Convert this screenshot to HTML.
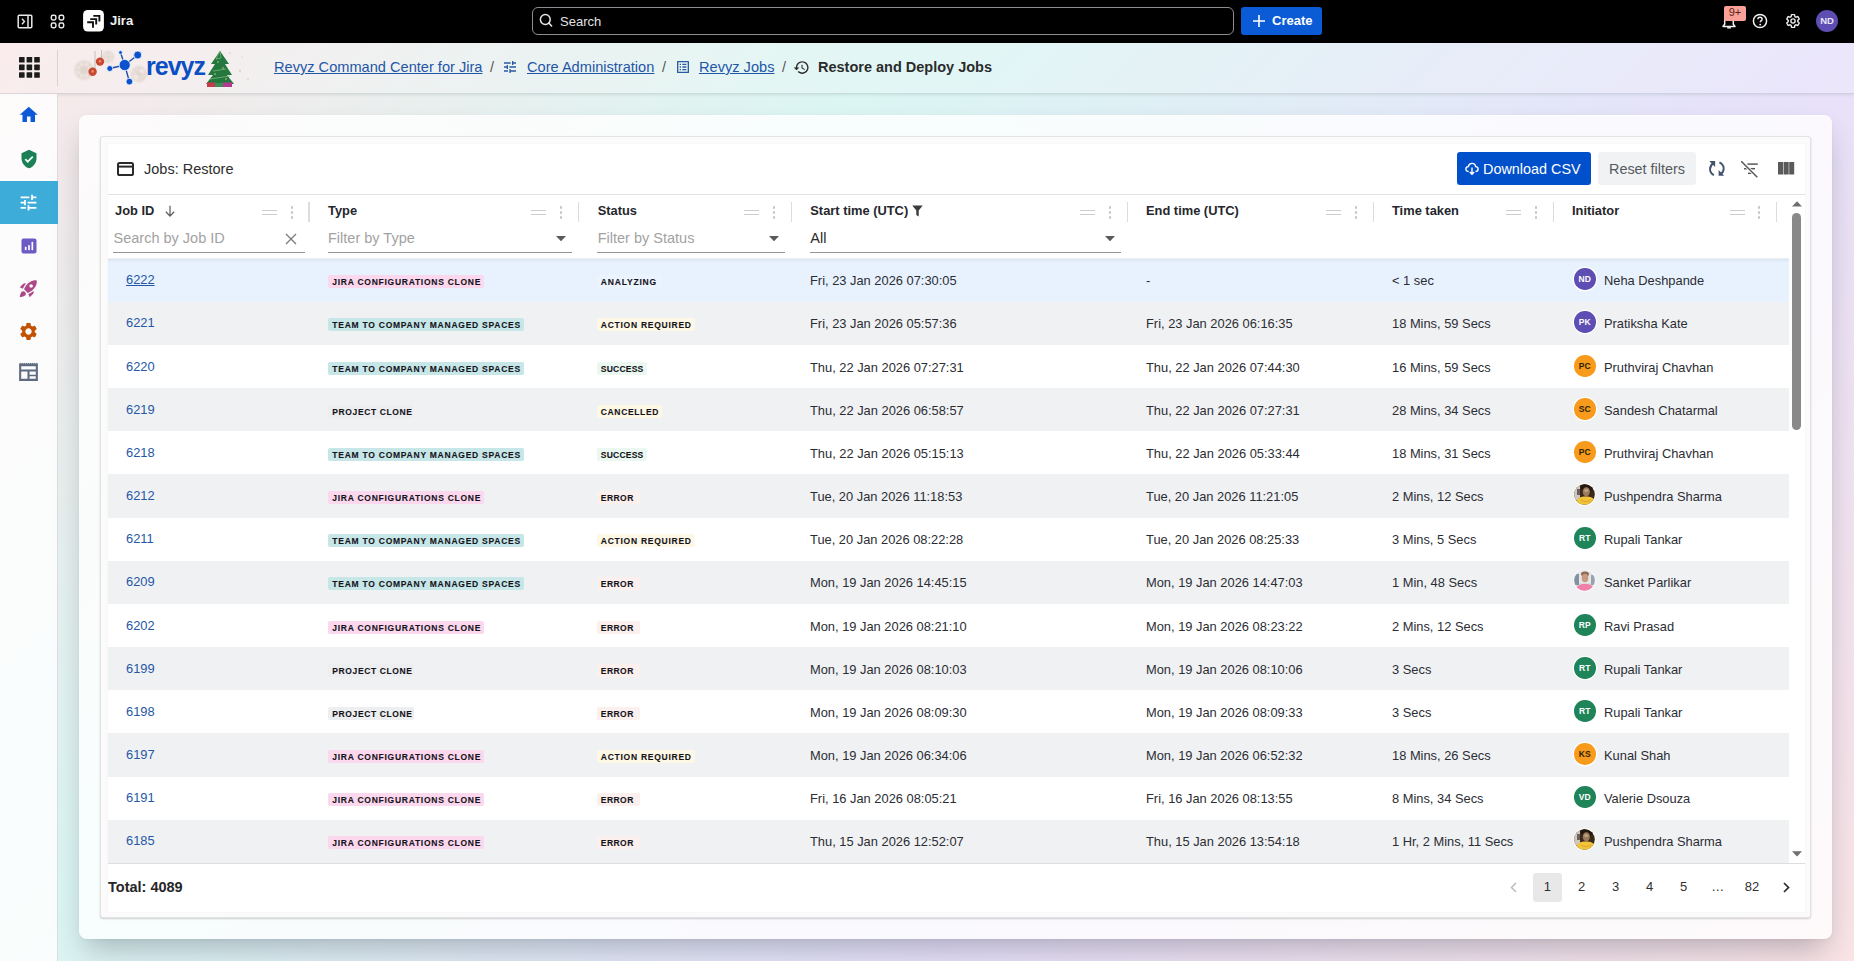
<!DOCTYPE html>
<html><head><meta charset="utf-8"><title>Restore and Deploy Jobs</title><style>
*{box-sizing:border-box;margin:0;padding:0}
html,body{width:1854px;height:961px;overflow:hidden}
body{position:relative;font-family:"Liberation Sans",sans-serif;color:#292a2e;
 background:linear-gradient(135deg,#fbe7e9 0%,#dbf6f3 34%,#e7e1fa 67%,#fae4e6 100%)}
.a{position:absolute;white-space:nowrap;line-height:1}
#top{left:0;top:0;width:1854px;height:43px;background:#000}
#hdr{left:0;top:43px;width:1854px;height:51px;background:rgba(255,255,255,.18);border-bottom:1px solid rgba(120,130,130,.22);box-shadow:0 1px 3px rgba(0,40,40,.10)}
#side{left:0;top:94px;width:58px;height:867px;background:rgba(255,255,255,.82);border-right:1px solid rgba(170,160,165,.35)}
#outer{left:79px;top:115px;width:1753px;height:824px;background:rgba(255,255,255,.80);border-radius:8px;box-shadow:0 16px 30px -6px rgba(40,45,60,.30),0 1px 3px rgba(0,0,0,.04);border-top:1px solid rgba(255,255,255,.7)}
#inner{left:100px;top:136px;width:1711px;height:782px;background:#fbfbfc;border:1px solid #e3e3e6;border-radius:3px;box-shadow:0 1px 2px rgba(0,0,0,.18)}
.bc{font-size:14.6px;color:#1f56a8;text-decoration:underline;text-underline-offset:1px}
.sep{font-size:14.5px;color:#555}
.hd{font-size:12.87px;font-weight:bold;color:#25272c}
.ph{font-size:14.5px;color:#9e9e9e}
.ul{height:1px;background:#959595}
.cell{font-size:12.87px;color:#2b2d33}
.lnk{font-size:12.87px;color:#2557a7}
.chip{height:13.5px;border-radius:2px}
.ct{font-size:8.5px;font-weight:bold;color:#15131a;-webkit-text-stroke:0.1px #15131a}
.drag{width:15px;height:5.6px;border-top:1.8px solid #cdcdcd;border-bottom:1.8px solid #cdcdcd}
.dot{width:2.4px;height:2.4px;border-radius:50%;background:#c4c4c4}
.vsep{width:1.5px;height:20px;background:#dcdcdc}
.av{width:21.5px;height:21.5px;border-radius:50%;box-shadow:0 0 0 1.3px #fff;font-size:8.5px;font-weight:bold;text-align:center;line-height:23px}
.pg{font-size:13px;color:#303030;text-align:center;width:28px}
</style></head><body>
<div id="top" class="a"></div>
<svg class="a" style="left:17px;top:14px" width="16" height="15" viewBox="0 0 16 15"><rect x="1.2" y="1.2" width="13.6" height="12.6" rx="1" fill="none" stroke="#e8e8e8" stroke-width="1.5"/><line x1="11" y1="1.5" x2="11" y2="13.5" stroke="#e8e8e8" stroke-width="1.5"/><path d="M5 4.8 L7.4 7.5 L5 10.2" fill="none" stroke="#e8e8e8" stroke-width="1.4"/></svg>
<svg class="a" style="left:50px;top:14px" width="15" height="15" viewBox="0 0 15 15"><g fill="none" stroke="#e8e8e8" stroke-width="1.5"><rect x="1.3" y="1.3" width="4.6" height="4.6" rx="1.6"/><rect x="9.1" y="1.3" width="4.6" height="4.6" rx="1.6"/><rect x="1.3" y="9.1" width="4.6" height="4.6" rx="1.6"/><rect x="9.1" y="9.1" width="4.6" height="4.6" rx="1.6"/></g></svg>
<svg class="a" style="left:83px;top:10px" width="21" height="22" viewBox="0 0 21 22"><rect x="0.1" y="0" width="20.8" height="21.6" rx="4.6" fill="#fff"/><g fill="none" stroke="#111" stroke-width="1.9" stroke-linejoin="miter"><path d="M10.3 5.9 H16.4 V11.6"/><path d="M7.2 9.1 H13.2 V14.6"/><path d="M4.2 12.2 H10.0 V17.8"/></g></svg>
<div class="a" style="left:110px;top:14px;font-size:13px;font-weight:bold;color:#f0f0f0">Jira</div>
<div class="a" style="left:532px;top:7px;width:702px;height:28px;border:1px solid #8b8d92;border-radius:6px;background:#000"></div>
<svg class="a" style="left:539px;top:13px" width="15" height="15" viewBox="0 0 15 15"><circle cx="6.3" cy="6.5" r="4.9" fill="none" stroke="#e6e6e6" stroke-width="1.5"/><line x1="9.8" y1="10" x2="12.6" y2="13" stroke="#e6e6e6" stroke-width="1.6" stroke-linecap="round"/></svg>
<div class="a" style="left:560px;top:15px;font-size:13px;color:#e2e2e2">Search</div>
<div class="a" style="left:1241px;top:7px;width:81px;height:28px;background:#0b5bd6;border-radius:3px"></div>
<svg class="a" style="left:1252px;top:14px" width="14" height="14" viewBox="0 0 14 14"><path d="M7 1V13M1 7H13" stroke="#fff" stroke-width="1.6"/></svg>
<div class="a" style="left:1272px;top:14px;font-size:13px;font-weight:bold;color:#fff">Create</div>
<svg class="a" style="left:1720px;top:12px" width="18" height="18" viewBox="0 0 18 18"><path d="M3 14.5 H15 L13.3 12.2 V8.2 C13.3 5.6 11.3 3.7 9 3.7 C6.7 3.7 4.7 5.6 4.7 8.2 V12.2 Z" fill="none" stroke="#f0f0f0" stroke-width="1.5" stroke-linejoin="round"/><path d="M7.2 15.8 H10.8" stroke="#f0f0f0" stroke-width="1.5"/></svg>
<div class="a" style="left:1724px;top:6px;width:22px;height:15px;background:#f9a196;border-radius:2px"></div>
<div class="a" style="left:1724px;top:7px;width:22px;text-align:center;font-size:11px;color:#5a1d1d">9+</div>
<svg class="a" style="left:1752px;top:13px" width="16" height="16" viewBox="0 0 16 16"><circle cx="8" cy="8" r="6.6" fill="none" stroke="#f0f0f0" stroke-width="1.5"/><path d="M5.9 6.3 C5.9 5 6.9 4.3 8 4.3 C9.2 4.3 10.1 5.1 10.1 6.2 C10.1 7.6 8.3 7.7 8.3 9.3" fill="none" stroke="#f0f0f0" stroke-width="1.5"/><circle cx="8.2" cy="11.6" r="0.95" fill="#f0f0f0"/></svg>
<svg class="a" style="left:1785px;top:13px" width="16" height="16" viewBox="0 0 24 24"><path d="M19.14 12.94c.04-.3.06-.61.06-.94 0-.32-.02-.64-.07-.94l2.03-1.58c.18-.14.23-.41.12-.61l-1.92-3.32c-.12-.22-.37-.29-.59-.22l-2.39.96c-.5-.38-1.03-.7-1.62-.94l-.36-2.54c-.04-.24-.24-.41-.48-.41h-3.84c-.24 0-.43.17-.47.41l-.36 2.54c-.59.24-1.130.57-1.62.94l-2.39-.96c-.22-.08-.47 0-.59.22L2.74 8.87c-.12.21-.08.47.12.61l2.030 1.58c-.05.3-.09.63-.09.94s.02.64.07.94l-2.03 1.58c-.18.14-.23.41-.12.61l1.92 3.32c.12.22.37.29.59.22l2.39-.96c.5.38 1.03.7 1.62.94l.36 2.54c.05.24.24.41.48.41h3.84c.24 0 .44-.17.47-.41l.36-2.54c.59-.24 1.13-.56 1.62-.94l2.39.96c.22.08.47 0 .59-.22l1.92-3.32c.12-.22.07-.47-.12-.61l-2.01-1.58z" fill="none" stroke="#f0f0f0" stroke-width="2"/><circle cx="12" cy="12" r="3.2" fill="none" stroke="#f0f0f0" stroke-width="2"/></svg>
<div class="a" style="left:1816px;top:10px;width:22px;height:22px;border-radius:50%;background:#5e4db2"></div>
<div class="a" style="left:1816px;top:16px;width:22px;text-align:center;font-size:9.5px;font-weight:bold;color:#e9e6f7">ND</div>
<div id="hdr" class="a"></div>
<div class="a" style="left:57px;top:50px;width:1px;height:36px;background:rgba(140,130,135,.25)"></div>
<svg class="a" style="left:19px;top:57px" width="21" height="21" viewBox="0 0 21 21"><g fill="#1c1c1c"><rect x="0.0" y="0.0" width="5.6" height="5.6" rx=".6"/><rect x="7.6" y="0.0" width="5.6" height="5.6" rx=".6"/><rect x="15.2" y="0.0" width="5.6" height="5.6" rx=".6"/><rect x="0.0" y="7.6" width="5.6" height="5.6" rx=".6"/><rect x="7.6" y="7.6" width="5.6" height="5.6" rx=".6"/><rect x="15.2" y="7.6" width="5.6" height="5.6" rx=".6"/><rect x="0.0" y="15.2" width="5.6" height="5.6" rx=".6"/><rect x="7.6" y="15.2" width="5.6" height="5.6" rx=".6"/><rect x="15.2" y="15.2" width="5.6" height="5.6" rx=".6"/></g></svg>
<svg class="a" style="left:70px;top:49px" width="185" height="40" viewBox="0 0 185 40">
<filter id="bl"><feGaussianBlur stdDeviation="0.9"/></filter>
<g fill="none" stroke="#d8cdc2" stroke-width="1.8" opacity=".75" filter="url(#bl)">
<circle cx="14" cy="21" r="8.5"/><circle cx="14" cy="21" r="3.5"/><path d="M5 21H23M14 12V30M8 15L20 27M20 15L8 27"/>
<circle cx="69" cy="25" r="7"/><path d="M62 25H76M69 18V32M64 20L74 30"/>
<circle cx="38" cy="8" r="5"/><path d="M33 8H43M38 3V13"/>
</g>
<g stroke="#bdb2a8" stroke-width=".8"><line x1="25" y1="2" x2="25" y2="22"/><line x1="31.5" y1="1" x2="31.5" y2="12"/></g>
<circle cx="30" cy="12.6" r="4.2" fill="#c7482f"/><circle cx="22.6" cy="22.8" r="4.2" fill="#c54a30"/>
<circle cx="30" cy="12.2" r="1.3" fill="#f08870"/><circle cx="22.6" cy="22.4" r="1.3" fill="#f08870"/>
<g stroke="#1d4aa8" stroke-width="1.4"><line x1="54.7" y1="16" x2="50.5" y2="3.5"/><line x1="54.7" y1="16" x2="67.7" y2="6"/><line x1="54.7" y1="16" x2="39.8" y2="19.5"/><line x1="54.7" y1="16" x2="59.4" y2="32.6"/></g>
<g fill="#0b52cc" stroke="#f4faff" stroke-width=".8"><circle cx="54.7" cy="16" r="5.6"/><circle cx="50.5" cy="3.5" r="1.9"/><circle cx="67.7" cy="6" r="4"/><circle cx="39.8" cy="19.5" r="3"/><circle cx="59.4" cy="32.6" r="3.4"/></g>
<g fill="#e6d6bc" opacity=".9"><circle cx="152" cy="8" r="1"/><circle cx="170" cy="22" r="1.2"/><circle cx="178" cy="30" r="1"/><circle cx="160" cy="4" r="1"/><circle cx="172" cy="8" r=".8"/></g>
<path d="M150 2 L141 15 H145 L138 26 H143 L136 35 H164 L157 26 H162 L155 15 H159 Z" fill="#23773f"/>
<path d="M150 2 L146 10 L151 9 Z M143 22 L156 20 M140 30 L160 27" stroke="#7ab872" stroke-width=".8" fill="none"/>
<g fill="#e8e0a0"><circle cx="148" cy="13" r=".7"/><circle cx="153" cy="19" r=".7"/><circle cx="145" cy="25" r=".7"/><circle cx="156" cy="30" r=".7"/></g>
<rect x="137" y="33.5" width="8" height="4.5" fill="#c73b4e"/><rect x="145" y="34" width="8" height="4" fill="#3b8e55"/><rect x="153" y="33.5" width="9" height="4.5" fill="#b23a8e"/>
</svg>
<div class="a" style="left:146px;top:54px;font-size:25px;font-weight:bold;color:#0b4fc4;letter-spacing:-1px">revyz</div>
<div class="a bc" style="left:274px;top:60px">Revyz Command Center for Jira</div>
<div class="a sep" style="left:490px;top:60px">/</div>
<svg class="a" style="left:502px;top:59px" width="16" height="16" viewBox="0 0 24 24"><path fill="#2a5aa0" d="M3 17v2h6v-2H3zM3 5v2h10V5H3zm10 16v-2h8v-2h-8v-2h-2v6h2zM7 9v2H3v2h4v2h2V9H7zm14 4v-2H11v2h10zm-6-4h2V7h4V5h-4V3h-2v6z"/></svg>
<div class="a bc" style="left:527px;top:60px">Core Administration</div>
<div class="a sep" style="left:662px;top:60px">/</div>
<svg class="a" style="left:675px;top:59px" width="16" height="16" viewBox="0 0 24 24"><path fill="#2a5aa0" d="M19 5v14H5V5h14m1.1-2H3.9c-.5 0-.9.4-.9.9v16.2c0 .4.4.9.9.9h16.2c.4 0 .9-.5.9-.9V3.9c0-.5-.5-.9-.9-.9zM11 7h6v2h-6V7zm0 4h6v2h-6v-2zm0 4h6v2h-6zM7 7h2v2H7zm0 4h2v2H7zm0 4h2v2H7z"/></svg>
<div class="a bc" style="left:699px;top:60px">Revyz Jobs</div>
<div class="a sep" style="left:782px;top:60px">/</div>
<svg class="a" style="left:793px;top:59px" width="17" height="17" viewBox="0 0 24 24"><path fill="#2b2b2b" d="M13 3c-4.97 0-9 4.03-9 9H1l3.89 3.89.07.14L9 12H6c0-3.87 3.13-7 7-7s7 3.13 7 7-3.13 7-7 7c-1.93 0-3.68-.79-4.94-2.06l-1.42 1.42C8.27 19.99 10.51 21 13 21c4.97 0 9-4.03 9-9s-4.03-9-9-9zm-1 5v5l4.28 2.54.72-1.21-3.5-2.08V8H12z"/></svg>
<div class="a" style="left:818px;top:60px;font-size:14.5px;font-weight:bold;color:#2b2b2b">Restore and Deploy Jobs</div>
<div id="side" class="a"></div>
<div class="a" style="left:0;top:181px;width:58px;height:43px;background:#3eacd8"></div>
<svg class="a" style="left:17.9px;top:104.2px" width="21.5" height="21.5" viewBox="0 0 24 24"><g fill="#0c5ad8"><path d="M10 20v-6h4v6h5v-8h3L12 3 2 12h3v8z"/></g></svg>
<svg class="a" style="left:18.7px;top:148.6px" width="20" height="20" viewBox="0 0 24 24"><g fill="#1d7f55"><path d="M12 1L3 5v6c0 5.55 3.84 10.74 9 12 5.16-1.26 9-6.45 9-12V5l-9-4z"/><path d="M7.5 12.2l3 3 6-6" fill="none" stroke="#e8fff4" stroke-width="2.2"/></g></svg>
<svg class="a" style="left:18.2px;top:192.3px" width="21" height="21" viewBox="0 0 24 24"><g fill="#ffffff"><path d="M3 17v2h6v-2H3zM3 5v2h10V5H3zm10 16v-2h8v-2h-8v-2h-2v6h2zM7 9v2H3v2h4v2h2V9H7zm14 4v-2H11v2h10zm-6-4h2V7h4V5h-4V3h-2v6z"/></g></svg>
<svg class="a" style="left:18.7px;top:235.6px" width="20" height="20" viewBox="0 0 24 24"><g fill="#6b5bc4"><rect x="3" y="3" width="18" height="18" rx="2.5"/><g fill="#fff"><rect x="7" y="13" width="2" height="4"/><rect x="11" y="11" width="2" height="6"/><rect x="15" y="7" width="2" height="10"/></g></g></svg>
<svg class="a" style="left:18.2px;top:278.1px" width="21" height="21" viewBox="0 0 24 24"><g fill="#ae4787"><path d="M9.19 6.35c-2.04 2.29-3.44 5.58-3.57 5.89L2 10.69l4.05-4.05c.47-.47 1.15-.68 1.81-.55l1.33.26zM11.17 17s3.740-1.55 5.89-3.7c5.4-5.4 4.5-9.62 4.21-10.57-.95-.3-5.17-1.19-10.57 4.21C8.55 9.09 7 12.83 7 12.83L11.17 17zm6.48-2.19c-2.29 2.04-5.58 3.44-5.89 3.570L13.31 22l4.05-4.05c.47-.47.68-1.15.55-1.81l-.26-1.33zM9 18c0 .83-.34 1.58-.88 2.12C6.94 21.3 2 22 2 22s.7-4.94 1.88-6.12C4.42 15.34 5.17 15 6 15c1.66 0 3 1.34 3 3zm4-9c0-1.1.9-2 2-2s2 .9 2 2-.9 2-2 2-2-.9-2-2z"/></g></svg>
<svg class="a" style="left:18.2px;top:321.0px" width="21" height="21" viewBox="0 0 24 24"><g fill="#c25100"><path d="M19.14 12.94c.04-.3.06-.61.06-.94 0-.32-.02-.64-.07-.94l2.03-1.58c.18-.14.23-.41.12-.61l-1.92-3.32c-.12-.22-.37-.29-.59-.22l-2.39.96c-.5-.38-1.03-.7-1.62-.94l-.36-2.54c-.04-.24-.24-.41-.48-.41h-3.84c-.24 0-.43.17-.47.41l-.36 2.54c-.59.24-1.13.57-1.62.94l-2.39-.96c-.22-.08-.47 0-.59.22L2.74 8.87c-.12.21-.08.47.12.61l2.03 1.58c-.05.3-.09.63-.09.94s.02.64.07.94l-2.03 1.58c-.18.14-.23.41-.12.61l1.92 3.32c.12.22.37.29.59.22l2.39-.96c.5.38 1.03.7 1.62.94l.36 2.54c.05.24.24.41.48.41h3.84c.24 0 .44-.17.47-.41l.36-2.54c.59-.24 1.13-.56 1.62-.94l2.39.96c.22.08.47 0 .59-.22l1.92-3.32c.12-.22.07-.47-.12-.61l-2.01-1.58zM12 15.6c-1.98 0-3.6-1.62-3.6-3.6s1.62-3.6 3.6-3.6 3.6 1.62 3.6 3.6-1.62 3.6-3.6 3.6z"/></g></svg>
<svg class="a" style="left:16.2px;top:359.0px" width="25" height="25" viewBox="0 0 24 24"><g fill="#5f6b80"><path d="M3 4.5 L4 3.5 L5 4.5 L6 3.5 L7 4.5 L8 3.5 L9 4.5 L10 3.5 L11 4.5 L12 3.5 L13 4.5 L14 3.5 L15 4.5 L16 3.5 L17 4.5 L18 3.5 L19 4.5 L20 3.5 L21 4.5 V21 H3 Z M5 7 V10 H19 V7 Z M5 12 V19 H11 V12 Z M13 12 V15 H19 V12 Z M13 16.5 V19 H19 V16.5 Z" fill-rule="evenodd"/></g></svg>
<div id="outer" class="a"></div>
<div id="inner" class="a"></div>
<div class="a" style="left:107.5px;top:143.5px;width:1697px;height:768px;background:#fff;box-shadow:0 0 1px rgba(0,0,0,.08)"></div>
<svg class="a" style="left:117px;top:161.5px" width="17" height="14" viewBox="0 0 17 14"><rect x="1" y="1" width="15" height="12" rx="1.6" fill="none" stroke="#2a2a2a" stroke-width="2"/><line x1="1" y1="4.6" x2="16" y2="4.6" stroke="#2a2a2a" stroke-width="2"/></svg>
<div class="a" style="left:144px;top:162px;font-size:14.5px;color:#2e2e2e">Jobs: Restore</div>
<div class="a" style="left:1457px;top:152px;width:134px;height:33px;background:#0050cc;border-radius:3px"></div>
<svg class="a" style="left:1465px;top:162px" width="14" height="13" viewBox="0 0 14 13"><path d="M3.6 9.5 C1.8 9.5 0.9 8.3 0.9 7 C0.9 5.6 2 4.6 3.3 4.6 C3.7 2.6 5.2 1.4 7 1.4 C9 1.4 10.5 2.9 10.6 4.6 C12 4.6 13.1 5.7 13.1 7 C13.1 8.4 12 9.5 10.5 9.5" fill="none" stroke="#fff" stroke-width="1.4"/><path d="M7 5.5 V12.5 M4.8 10 L7 12.3 L9.2 10" fill="none" stroke="#fff" stroke-width="1.4"/></svg>
<div class="a" style="left:1483px;top:162px;font-size:14.4px;color:#fff">Download CSV</div>
<div class="a" style="left:1598px;top:152px;width:98px;height:33px;background:#f1f2f4;border-radius:3px"></div>
<div class="a" style="left:1609px;top:162px;font-size:14.4px;color:#555a60">Reset filters</div>
<svg class="a" style="left:1708px;top:160px" width="18" height="18" viewBox="0 0 18 18"><g fill="none" stroke="#44546f" stroke-width="1.9"><path d="M5.2 3.4 C2.9 5 2 7 2 9.2 C2 11.6 3.4 13.7 5.9 15.2"/><path d="M11.4 2.4 C14.2 3.8 15.7 6 15.7 8.6 C15.7 11 14.6 13 12.6 14.4"/></g><path d="M1.3 1.1 H7.1 V6.9 Z" fill="#44546f"/><path d="M16.2 15.7 H10.6 V10.1 Z" fill="#44546f"/></svg>
<svg class="a" style="left:1740px;top:160px" width="19" height="19" viewBox="0 0 19 19"><g stroke="#585858" stroke-width="1.5" fill="none"><line x1="7.4" y1="4.1" x2="17.8" y2="4.1"/><line x1="4" y1="8.7" x2="15" y2="8.7"/><line x1="8" y1="13.3" x2="11.8" y2="13.3"/></g><line x1="1.2" y1="1.2" x2="17.3" y2="17.3" stroke="#fff" stroke-width="3.2"/><line x1="1.2" y1="1.2" x2="17.3" y2="17.3" stroke="#585858" stroke-width="1.5"/></svg>
<svg class="a" style="left:1777.7px;top:162.2px" width="17" height="13" viewBox="0 0 17 13"><g fill="#5a5a5a"><rect x="0" y="0" width="5.2" height="12.5"/><rect x="5.7" y="0" width="5" height="12.5"/><rect x="11.2" y="0" width="5" height="12.5"/></g></svg>
<div class="a" style="left:108px;top:194px;width:1697px;height:1px;background:#e3e3e3"></div>
<div class="a hd" style="left:115px;top:205px">Job ID</div>
<div class="a drag" style="left:262px;top:209.5px"></div>
<div class="a dot" style="left:290.5px;top:206.3px"></div>
<div class="a dot" style="left:290.5px;top:211.3px"></div>
<div class="a dot" style="left:290.5px;top:216.3px"></div>
<div class="a vsep" style="left:308.3px;top:202px"></div>
<div class="a" style="left:113.5px;top:231px;font-size:14.5px;color:#a2a2a2">Search by Job ID</div>
<div class="a ul" style="left:113px;top:251.8px;width:191.7px"></div>
<svg class="a" style="left:284.5px;top:233px" width="12" height="12" viewBox="0 0 12 12"><path d="M1 1L11 11M11 1L1 11" stroke="#7a7a7a" stroke-width="1.3"/></svg>
<div class="a hd" style="left:328px;top:205px">Type</div>
<div class="a drag" style="left:531.2px;top:209.5px"></div>
<div class="a dot" style="left:559.7px;top:206.3px"></div>
<div class="a dot" style="left:559.7px;top:211.3px"></div>
<div class="a dot" style="left:559.7px;top:216.3px"></div>
<div class="a vsep" style="left:577.5px;top:202px"></div>
<div class="a" style="left:328px;top:231px;font-size:14.5px;color:#a2a2a2">Filter by Type</div>
<div class="a ul" style="left:327.7px;top:251.8px;width:244.0px"></div>
<svg class="a" style="left:555.7px;top:236px" width="10" height="6" viewBox="0 0 10 6"><path d="M0 0H10L5 5.2Z" fill="#5a5a5a"/></svg>
<div class="a hd" style="left:597.7px;top:205px">Status</div>
<div class="a drag" style="left:744.3px;top:209.5px"></div>
<div class="a dot" style="left:772.8px;top:206.3px"></div>
<div class="a dot" style="left:772.8px;top:211.3px"></div>
<div class="a dot" style="left:772.8px;top:216.3px"></div>
<div class="a vsep" style="left:790.6px;top:202px"></div>
<div class="a" style="left:597.7px;top:231px;font-size:14.5px;color:#a2a2a2">Filter by Status</div>
<div class="a ul" style="left:597.4000000000001px;top:251.8px;width:187.4px"></div>
<svg class="a" style="left:768.8px;top:236px" width="10" height="6" viewBox="0 0 10 6"><path d="M0 0H10L5 5.2Z" fill="#5a5a5a"/></svg>
<div class="a hd" style="left:810.3px;top:205px">Start time (UTC)</div>
<div class="a drag" style="left:1080.3px;top:209.5px"></div>
<div class="a dot" style="left:1108.8px;top:206.3px"></div>
<div class="a dot" style="left:1108.8px;top:211.3px"></div>
<div class="a dot" style="left:1108.8px;top:216.3px"></div>
<div class="a vsep" style="left:1126.6px;top:202px"></div>
<div class="a" style="left:810.3px;top:231px;font-size:14.5px;color:#2a2a2a">All</div>
<div class="a ul" style="left:810.0px;top:251.8px;width:310.8px"></div>
<svg class="a" style="left:1104.8px;top:236px" width="10" height="6" viewBox="0 0 10 6"><path d="M0 0H10L5 5.2Z" fill="#5a5a5a"/></svg>
<div class="a hd" style="left:1146px;top:205px">End time (UTC)</div>
<div class="a drag" style="left:1326.3px;top:209.5px"></div>
<div class="a dot" style="left:1354.8px;top:206.3px"></div>
<div class="a dot" style="left:1354.8px;top:211.3px"></div>
<div class="a dot" style="left:1354.8px;top:216.3px"></div>
<div class="a vsep" style="left:1372.6px;top:202px"></div>
<div class="a hd" style="left:1392px;top:205px">Time taken</div>
<div class="a drag" style="left:1506.3px;top:209.5px"></div>
<div class="a dot" style="left:1534.8px;top:206.3px"></div>
<div class="a dot" style="left:1534.8px;top:211.3px"></div>
<div class="a dot" style="left:1534.8px;top:216.3px"></div>
<div class="a vsep" style="left:1552.6px;top:202px"></div>
<div class="a hd" style="left:1572px;top:205px">Initiator</div>
<div class="a drag" style="left:1729.6px;top:209.5px"></div>
<div class="a dot" style="left:1758.1px;top:206.3px"></div>
<div class="a dot" style="left:1758.1px;top:211.3px"></div>
<div class="a dot" style="left:1758.1px;top:216.3px"></div>
<div class="a vsep" style="left:1775.9px;top:202px"></div>
<svg class="a" style="left:164px;top:204.5px" width="12" height="12" viewBox="0 0 12 12"><path d="M6 0.8V11M1.8 6.8L6 11L10.2 6.8" fill="none" stroke="#606060" stroke-width="1.25"/></svg>
<svg class="a" style="left:912px;top:204.5px" width="11" height="12" viewBox="0 0 11 12"><path d="M0.3 0.5H10.7L6.7 5.6V11.5L4.3 10V5.6Z" fill="#3a3a3a"/></svg>
<div class="a" style="left:108px;top:258.60px;width:1681px;height:43.17px;background:#e8f2fe"></div>
<div class="a lnk" style="left:126px;top:274px;text-decoration:underline;">6222</div>
<div class="a chip" style="left:328.2px;top:274.75px;width:155.4px;background:#fcd8ee"></div>
<div class="a ct" style="left:332.3px;top:278px;letter-spacing:0.74px">JIRA CONFIGURATIONS CLONE</div>
<div class="a chip" style="left:597px;top:274.75px;width:65px;background:#ebf3fe"></div>
<div class="a ct" style="left:600.8px;top:278px;letter-spacing:0.82px">ANALYZING</div>
<div class="a cell" style="left:810px;top:275px">Fri, 23 Jan 2026 07:30:05</div>
<div class="a cell" style="left:1146px;top:275px">-</div>
<div class="a cell" style="left:1392px;top:275px">< 1 sec</div>
<div class="a av" style="left:1574px;top:268.30px;background:#5e4db2;color:#fff">ND</div>
<div class="a cell" style="left:1604px;top:275px">Neha Deshpande</div>
<div class="a" style="left:108px;top:301.77px;width:1681px;height:43.17px;background:#f0f1f3"></div>
<div class="a lnk" style="left:126px;top:317px;">6221</div>
<div class="a chip" style="left:328.2px;top:317.75px;width:195.4px;background:#c6e6e8"></div>
<div class="a ct" style="left:332.3px;top:321px;letter-spacing:0.75px">TEAM TO COMPANY MANAGED SPACES</div>
<div class="a chip" style="left:597px;top:317.75px;width:98px;background:#fdf8e6"></div>
<div class="a ct" style="left:600.8px;top:321px;letter-spacing:0.74px">ACTION REQUIRED</div>
<div class="a cell" style="left:810px;top:318px">Fri, 23 Jan 2026 05:57:36</div>
<div class="a cell" style="left:1146px;top:318px">Fri, 23 Jan 2026 06:16:35</div>
<div class="a cell" style="left:1392px;top:318px">18 Mins, 59 Secs</div>
<div class="a av" style="left:1574px;top:311.30px;background:#5e4db2;color:#fff">PK</div>
<div class="a cell" style="left:1604px;top:318px">Pratiksha Kate</div>
<div class="a" style="left:108px;top:344.94px;width:1681px;height:43.17px;background:#ffffff"></div>
<div class="a lnk" style="left:126px;top:361px;">6220</div>
<div class="a chip" style="left:328.2px;top:361.75px;width:195.4px;background:#c6e6e8"></div>
<div class="a ct" style="left:332.3px;top:365px;letter-spacing:0.75px">TEAM TO COMPANY MANAGED SPACES</div>
<div class="a chip" style="left:597px;top:361.75px;width:49.6px;background:#eaf8f1"></div>
<div class="a ct" style="left:600.8px;top:365px;letter-spacing:0.22px">SUCCESS</div>
<div class="a cell" style="left:810px;top:362px">Thu, 22 Jan 2026 07:27:31</div>
<div class="a cell" style="left:1146px;top:362px">Thu, 22 Jan 2026 07:44:30</div>
<div class="a cell" style="left:1392px;top:362px">16 Mins, 59 Secs</div>
<div class="a av" style="left:1574px;top:355.30px;background:#f89a1c;color:#2d2400">PC</div>
<div class="a cell" style="left:1604px;top:362px">Pruthviraj Chavhan</div>
<div class="a" style="left:108px;top:388.11px;width:1681px;height:43.17px;background:#f0f1f3"></div>
<div class="a lnk" style="left:126px;top:404px;">6219</div>
<div class="a chip" style="left:328.2px;top:404.75px;width:85.4px;background:#eceef0"></div>
<div class="a ct" style="left:332.3px;top:408px;letter-spacing:0.61px">PROJECT CLONE</div>
<div class="a chip" style="left:597px;top:404.75px;width:65.3px;background:#fdf8e6"></div>
<div class="a ct" style="left:600.8px;top:408px;letter-spacing:0.65px">CANCELLED</div>
<div class="a cell" style="left:810px;top:405px">Thu, 22 Jan 2026 06:58:57</div>
<div class="a cell" style="left:1146px;top:405px">Thu, 22 Jan 2026 07:27:31</div>
<div class="a cell" style="left:1392px;top:405px">28 Mins, 34 Secs</div>
<div class="a av" style="left:1574px;top:398.30px;background:#f89a1c;color:#2d2400">SC</div>
<div class="a cell" style="left:1604px;top:405px">Sandesh Chatarmal</div>
<div class="a" style="left:108px;top:431.28px;width:1681px;height:43.17px;background:#ffffff"></div>
<div class="a lnk" style="left:126px;top:447px;">6218</div>
<div class="a chip" style="left:328.2px;top:447.75px;width:195.4px;background:#c6e6e8"></div>
<div class="a ct" style="left:332.3px;top:451px;letter-spacing:0.75px">TEAM TO COMPANY MANAGED SPACES</div>
<div class="a chip" style="left:597px;top:447.75px;width:49.6px;background:#eaf8f1"></div>
<div class="a ct" style="left:600.8px;top:451px;letter-spacing:0.22px">SUCCESS</div>
<div class="a cell" style="left:810px;top:448px">Thu, 22 Jan 2026 05:15:13</div>
<div class="a cell" style="left:1146px;top:448px">Thu, 22 Jan 2026 05:33:44</div>
<div class="a cell" style="left:1392px;top:448px">18 Mins, 31 Secs</div>
<div class="a av" style="left:1574px;top:441.30px;background:#f89a1c;color:#2d2400">PC</div>
<div class="a cell" style="left:1604px;top:448px">Pruthviraj Chavhan</div>
<div class="a" style="left:108px;top:474.45px;width:1681px;height:43.17px;background:#f0f1f3"></div>
<div class="a lnk" style="left:126px;top:490px;">6212</div>
<div class="a chip" style="left:328.2px;top:490.75px;width:155.4px;background:#fcd8ee"></div>
<div class="a ct" style="left:332.3px;top:494px;letter-spacing:0.74px">JIRA CONFIGURATIONS CLONE</div>
<div class="a chip" style="left:597px;top:490.75px;width:43px;background:#fcf0ee"></div>
<div class="a ct" style="left:600.8px;top:494px;letter-spacing:0.45px">ERROR</div>
<div class="a cell" style="left:810px;top:491px">Tue, 20 Jan 2026 11:18:53</div>
<div class="a cell" style="left:1146px;top:491px">Tue, 20 Jan 2026 11:21:05</div>
<div class="a cell" style="left:1392px;top:491px">2 Mins, 12 Secs</div>
<svg class="a" style="left:1573px;top:483.30px" width="23" height="23" viewBox="0 0 23 23"><circle cx="11.5" cy="11.5" r="11.3" fill="#fffdf0"/><clipPath id="c5"><circle cx="11.5" cy="11.5" r="10.3"/></clipPath><g clip-path="url(#c5)"><rect width="23" height="23" fill="#3a2818"/><rect x="0" y="3" width="7" height="14" fill="#cfc8c0"/><rect x="4" y="6" width="3" height="6" fill="#6a6060"/><ellipse cx="14.5" cy="4" rx="7" ry="4" fill="#241810"/><ellipse cx="13.3" cy="8.8" rx="3.6" ry="4.6" fill="#9a7a5c"/><ellipse cx="13.3" cy="7.6" rx="2.2" ry="1.6" fill="#bba080"/><path d="M2 23 C3 15 7 13.5 13 13.5 C19 13.5 22 15 23 23 Z" fill="#f2c43a"/><path d="M8 17 C11 19 15 19 18 17" stroke="#e0a828" stroke-width="1.2" fill="none"/></g></svg>
<div class="a cell" style="left:1604px;top:491px">Pushpendra Sharma</div>
<div class="a" style="left:108px;top:517.62px;width:1681px;height:43.17px;background:#ffffff"></div>
<div class="a lnk" style="left:126px;top:533px;">6211</div>
<div class="a chip" style="left:328.2px;top:533.75px;width:195.4px;background:#c6e6e8"></div>
<div class="a ct" style="left:332.3px;top:537px;letter-spacing:0.75px">TEAM TO COMPANY MANAGED SPACES</div>
<div class="a chip" style="left:597px;top:533.75px;width:98px;background:#fdf8e6"></div>
<div class="a ct" style="left:600.8px;top:537px;letter-spacing:0.74px">ACTION REQUIRED</div>
<div class="a cell" style="left:810px;top:534px">Tue, 20 Jan 2026 08:22:28</div>
<div class="a cell" style="left:1146px;top:534px">Tue, 20 Jan 2026 08:25:33</div>
<div class="a cell" style="left:1392px;top:534px">3 Mins, 5 Secs</div>
<div class="a av" style="left:1574px;top:527.30px;background:#1f845a;color:#fff">RT</div>
<div class="a cell" style="left:1604px;top:534px">Rupali Tankar</div>
<div class="a" style="left:108px;top:560.79px;width:1681px;height:43.17px;background:#f0f1f3"></div>
<div class="a lnk" style="left:126px;top:576px;">6209</div>
<div class="a chip" style="left:328.2px;top:576.75px;width:195.4px;background:#c6e6e8"></div>
<div class="a ct" style="left:332.3px;top:580px;letter-spacing:0.75px">TEAM TO COMPANY MANAGED SPACES</div>
<div class="a chip" style="left:597px;top:576.75px;width:43px;background:#fcf0ee"></div>
<div class="a ct" style="left:600.8px;top:580px;letter-spacing:0.45px">ERROR</div>
<div class="a cell" style="left:810px;top:577px">Mon, 19 Jan 2026 14:45:15</div>
<div class="a cell" style="left:1146px;top:577px">Mon, 19 Jan 2026 14:47:03</div>
<div class="a cell" style="left:1392px;top:577px">1 Min, 48 Secs</div>
<svg class="a" style="left:1573px;top:569.30px" width="23" height="23" viewBox="0 0 23 23"><circle cx="11.5" cy="11.5" r="11.3" fill="#fdf6fb"/><clipPath id="c7"><circle cx="11.5" cy="11.5" r="10.3"/></clipPath><g clip-path="url(#c7)"><rect width="23" height="23" fill="#d8dde0"/><rect x="0" y="5" width="6" height="11" fill="#7f93a3"/><rect x="18" y="6" width="5" height="10" fill="#93a4b0"/><rect x="6" y="0" width="12" height="14" fill="#e8e6e6"/><ellipse cx="12" cy="5" rx="4" ry="2.6" fill="#8a6a52"/><ellipse cx="12" cy="9" rx="3.3" ry="4.3" fill="#c89a80"/><path d="M2 23 C3 17 6 15 12 15 C18 15 21 17 22 23 Z" fill="#f080a8"/></g></svg>
<div class="a cell" style="left:1604px;top:577px">Sanket Parlikar</div>
<div class="a" style="left:108px;top:603.96px;width:1681px;height:43.17px;background:#ffffff"></div>
<div class="a lnk" style="left:126px;top:620px;">6202</div>
<div class="a chip" style="left:328.2px;top:620.75px;width:155.4px;background:#fcd8ee"></div>
<div class="a ct" style="left:332.3px;top:624px;letter-spacing:0.74px">JIRA CONFIGURATIONS CLONE</div>
<div class="a chip" style="left:597px;top:620.75px;width:43px;background:#fcf0ee"></div>
<div class="a ct" style="left:600.8px;top:624px;letter-spacing:0.45px">ERROR</div>
<div class="a cell" style="left:810px;top:621px">Mon, 19 Jan 2026 08:21:10</div>
<div class="a cell" style="left:1146px;top:621px">Mon, 19 Jan 2026 08:23:22</div>
<div class="a cell" style="left:1392px;top:621px">2 Mins, 12 Secs</div>
<div class="a av" style="left:1574px;top:614.30px;background:#1f845a;color:#fff">RP</div>
<div class="a cell" style="left:1604px;top:621px">Ravi Prasad</div>
<div class="a" style="left:108px;top:647.13px;width:1681px;height:43.17px;background:#f0f1f3"></div>
<div class="a lnk" style="left:126px;top:663px;">6199</div>
<div class="a chip" style="left:328.2px;top:663.75px;width:85.4px;background:#eceef0"></div>
<div class="a ct" style="left:332.3px;top:667px;letter-spacing:0.61px">PROJECT CLONE</div>
<div class="a chip" style="left:597px;top:663.75px;width:43px;background:#fcf0ee"></div>
<div class="a ct" style="left:600.8px;top:667px;letter-spacing:0.45px">ERROR</div>
<div class="a cell" style="left:810px;top:664px">Mon, 19 Jan 2026 08:10:03</div>
<div class="a cell" style="left:1146px;top:664px">Mon, 19 Jan 2026 08:10:06</div>
<div class="a cell" style="left:1392px;top:664px">3 Secs</div>
<div class="a av" style="left:1574px;top:657.30px;background:#1f845a;color:#fff">RT</div>
<div class="a cell" style="left:1604px;top:664px">Rupali Tankar</div>
<div class="a" style="left:108px;top:690.30px;width:1681px;height:43.17px;background:#ffffff"></div>
<div class="a lnk" style="left:126px;top:706px;">6198</div>
<div class="a chip" style="left:328.2px;top:706.75px;width:85.4px;background:#eceef0"></div>
<div class="a ct" style="left:332.3px;top:710px;letter-spacing:0.61px">PROJECT CLONE</div>
<div class="a chip" style="left:597px;top:706.75px;width:43px;background:#fcf0ee"></div>
<div class="a ct" style="left:600.8px;top:710px;letter-spacing:0.45px">ERROR</div>
<div class="a cell" style="left:810px;top:707px">Mon, 19 Jan 2026 08:09:30</div>
<div class="a cell" style="left:1146px;top:707px">Mon, 19 Jan 2026 08:09:33</div>
<div class="a cell" style="left:1392px;top:707px">3 Secs</div>
<div class="a av" style="left:1574px;top:700.30px;background:#1f845a;color:#fff">RT</div>
<div class="a cell" style="left:1604px;top:707px">Rupali Tankar</div>
<div class="a" style="left:108px;top:733.47px;width:1681px;height:43.17px;background:#f0f1f3"></div>
<div class="a lnk" style="left:126px;top:749px;">6197</div>
<div class="a chip" style="left:328.2px;top:749.75px;width:155.4px;background:#fcd8ee"></div>
<div class="a ct" style="left:332.3px;top:753px;letter-spacing:0.74px">JIRA CONFIGURATIONS CLONE</div>
<div class="a chip" style="left:597px;top:749.75px;width:98px;background:#fdf8e6"></div>
<div class="a ct" style="left:600.8px;top:753px;letter-spacing:0.74px">ACTION REQUIRED</div>
<div class="a cell" style="left:810px;top:750px">Mon, 19 Jan 2026 06:34:06</div>
<div class="a cell" style="left:1146px;top:750px">Mon, 19 Jan 2026 06:52:32</div>
<div class="a cell" style="left:1392px;top:750px">18 Mins, 26 Secs</div>
<div class="a av" style="left:1574px;top:743.30px;background:#f89a1c;color:#2d2400">KS</div>
<div class="a cell" style="left:1604px;top:750px">Kunal Shah</div>
<div class="a" style="left:108px;top:776.64px;width:1681px;height:43.17px;background:#ffffff"></div>
<div class="a lnk" style="left:126px;top:792px;">6191</div>
<div class="a chip" style="left:328.2px;top:792.75px;width:155.4px;background:#fcd8ee"></div>
<div class="a ct" style="left:332.3px;top:796px;letter-spacing:0.74px">JIRA CONFIGURATIONS CLONE</div>
<div class="a chip" style="left:597px;top:792.75px;width:43px;background:#fcf0ee"></div>
<div class="a ct" style="left:600.8px;top:796px;letter-spacing:0.45px">ERROR</div>
<div class="a cell" style="left:810px;top:793px">Fri, 16 Jan 2026 08:05:21</div>
<div class="a cell" style="left:1146px;top:793px">Fri, 16 Jan 2026 08:13:55</div>
<div class="a cell" style="left:1392px;top:793px">8 Mins, 34 Secs</div>
<div class="a av" style="left:1574px;top:786.30px;background:#1f845a;color:#fff">VD</div>
<div class="a cell" style="left:1604px;top:793px">Valerie Dsouza</div>
<div class="a" style="left:108px;top:819.81px;width:1681px;height:43.17px;background:#f0f1f3"></div>
<div class="a lnk" style="left:126px;top:835px;">6185</div>
<div class="a chip" style="left:328.2px;top:835.75px;width:155.4px;background:#fcd8ee"></div>
<div class="a ct" style="left:332.3px;top:839px;letter-spacing:0.74px">JIRA CONFIGURATIONS CLONE</div>
<div class="a chip" style="left:597px;top:835.75px;width:43px;background:#fcf0ee"></div>
<div class="a ct" style="left:600.8px;top:839px;letter-spacing:0.45px">ERROR</div>
<div class="a cell" style="left:810px;top:836px">Thu, 15 Jan 2026 12:52:07</div>
<div class="a cell" style="left:1146px;top:836px">Thu, 15 Jan 2026 13:54:18</div>
<div class="a cell" style="left:1392px;top:836px">1 Hr, 2 Mins, 11 Secs</div>
<svg class="a" style="left:1573px;top:828.30px" width="23" height="23" viewBox="0 0 23 23"><circle cx="11.5" cy="11.5" r="11.3" fill="#fffdf0"/><clipPath id="c13"><circle cx="11.5" cy="11.5" r="10.3"/></clipPath><g clip-path="url(#c13)"><rect width="23" height="23" fill="#3a2818"/><rect x="0" y="3" width="7" height="14" fill="#cfc8c0"/><rect x="4" y="6" width="3" height="6" fill="#6a6060"/><ellipse cx="14.5" cy="4" rx="7" ry="4" fill="#241810"/><ellipse cx="13.3" cy="8.8" rx="3.6" ry="4.6" fill="#9a7a5c"/><ellipse cx="13.3" cy="7.6" rx="2.2" ry="1.6" fill="#bba080"/><path d="M2 23 C3 15 7 13.5 13 13.5 C19 13.5 22 15 23 23 Z" fill="#f2c43a"/><path d="M8 17 C11 19 15 19 18 17" stroke="#e0a828" stroke-width="1.2" fill="none"/></g></svg>
<div class="a cell" style="left:1604px;top:836px">Pushpendra Sharma</div>
<div class="a" style="left:108px;top:258px;width:1681px;height:5px;background:linear-gradient(180deg,rgba(60,70,90,.10),rgba(60,70,90,.05) 40%,rgba(60,70,90,0))"></div>
<svg class="a" style="left:1791.5px;top:200.5px" width="10" height="6" viewBox="0 0 10 6"><path d="M0 5.5H10L5 0.3Z" fill="#6e6e6e"/></svg>
<div class="a" style="left:1792px;top:212.5px;width:9px;height:217px;background:#8a898a;border-radius:4.5px"></div>
<svg class="a" style="left:1791.5px;top:850.5px" width="10" height="6" viewBox="0 0 10 6"><path d="M0 0.3H10L5 5.5Z" fill="#6e6e6e"/></svg>
<div class="a" style="left:108px;top:862.8px;width:1697px;height:1px;background:#dedede"></div>
<div class="a" style="left:108px;top:880px;font-size:14.5px;font-weight:bold;color:#262626">Total: 4089</div>
<svg class="a" style="left:1508.5px;top:881.5px" width="9" height="11" viewBox="0 0 9 11"><path d="M7 1L2.5 5.5L7 10" fill="none" stroke="#bdbdbd" stroke-width="1.6"/></svg>
<div class="a" style="left:1533px;top:873px;width:29px;height:29px;background:#e8e8e8;border-radius:3px"></div>
<div class="a pg" style="left:1533.3px;top:880px">1</div>
<div class="a pg" style="left:1567.5px;top:880px">2</div>
<div class="a pg" style="left:1601.5px;top:880px">3</div>
<div class="a pg" style="left:1635.6px;top:880px">4</div>
<div class="a pg" style="left:1669.6px;top:880px">5</div>
<div class="a pg" style="left:1703.8px;top:880px">…</div>
<div class="a pg" style="left:1738.0px;top:880px">82</div>
<svg class="a" style="left:1782px;top:881.5px" width="9" height="11" viewBox="0 0 9 11"><path d="M2 1L6.5 5.5L2 10" fill="none" stroke="#2a2a2a" stroke-width="1.7"/></svg>
</body></html>
